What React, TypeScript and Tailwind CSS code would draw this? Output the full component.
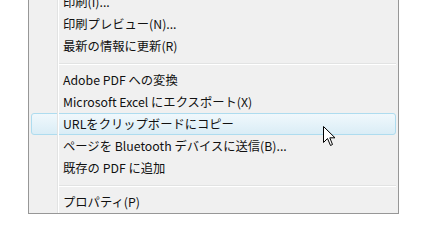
import React from "react";

type Item = { label?: string; separator?: boolean; hover?: boolean };

const items: Item[] = [
  { label: "印刷(I)..." },
  { label: "印刷プレビュー(N)..." },
  { label: "最新の情報に更新(R)" },
  { separator: true },
  { label: "Adobe PDF への変換" },
  { label: "Microsoft Excel にエクスポート(X)" },
  { label: "URLをクリップボードにコピー", hover: true },
  { label: "ページを Bluetooth デバイスに送信(B)..." },
  { label: "既存の PDF に追加" },
  { separator: true },
  { label: "プロパティ(P)" },
];

function Cursor() {
  return (
    <svg width="13" height="21" viewBox="0 0 13 21" className="absolute left-[323px] top-[126px]">
      <path
        d="M0.5 0.5 L0.5 16.5 L4.5 12.5 L7.5 19.5 L9.5 18.5 L6.8 11.8 L12 11.8 Z"
        fill="#fff"
        stroke="#000"
        strokeWidth="1"
        strokeLinejoin="miter"
      />
    </svg>
  );
}

export default function App() {
  return (
    <div
      className="relative w-[427px] h-[244px] bg-white overflow-hidden"
      style={{ fontFamily: '"Noto Sans CJK JP", "Noto Sans", sans-serif' }}
    >
      <div className="ml-[28px] -mt-[10px] w-[371px] border border-[#979797] bg-[#f0f0f0] relative">
        <div className="absolute left-[28px] top-0 bottom-0 w-[2px] border-l border-[#e2e3e3] border-r border-r-white" />
        <div className="flex flex-col">
          {items.map((it, i) =>
            it.separator ? (
              <div key={i} className="h-[12px] flex flex-col pt-[6px] pl-[30px] pr-[2px]">
                <div className="h-px bg-[#e2e3e3]" />
                <div className="h-px bg-white" />
              </div>
            ) : (
              <div key={i} className="h-[22px] px-[2px] flex">
                <div
                  className={
                    "flex-1 flex items-center rounded-[3px] border pl-[31px] text-[12.3px] text-[#111] leading-none " +
                    (it.hover
                      ? "border-[#aedcef] bg-gradient-to-b from-[#f0f8fc] to-[#daedf6]"
                      : "border-transparent")
                  }
                >
                  <span className="relative z-10">{it.label}</span>
                </div>
              </div>
            )
          )}
        </div>
      </div>
      <Cursor />
    </div>
  );
}
